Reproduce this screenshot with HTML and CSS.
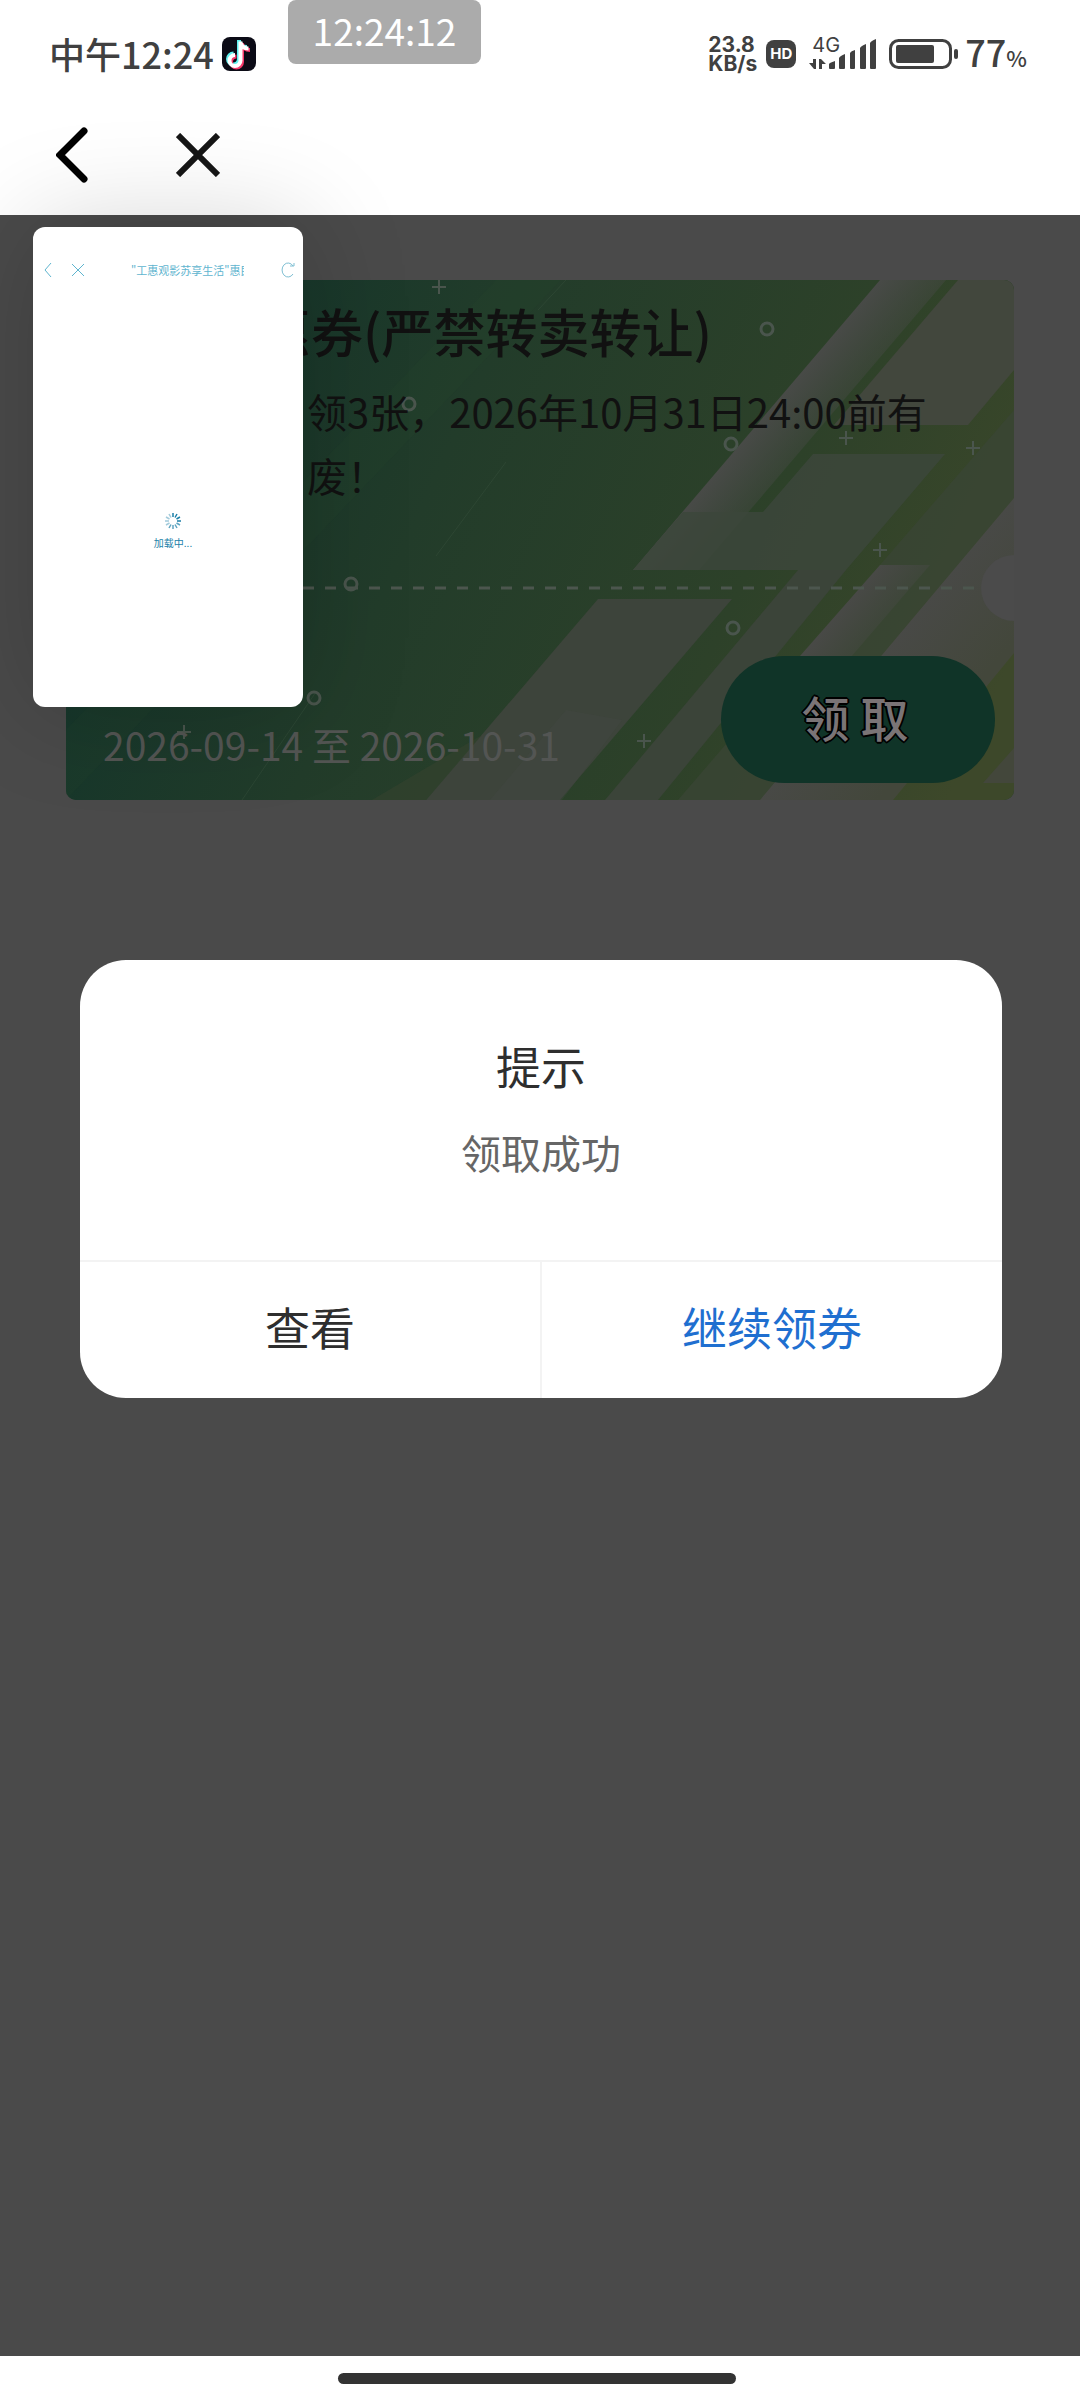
FILE: index.html
```html
<!DOCTYPE html>
<html lang="zh-CN">
<head>
<meta charset="utf-8">
<meta name="viewport" content="width=device-width, initial-scale=1">
<title>领取成功</title>
<link rel="stylesheet" href="styles.css">
</head>
<body>
<header class="top">
  <div class="status">
    <div class="status-left">
      <span class="clock">中午12:24</span>
      <svg class="app-icon" viewBox="0 0 34 34" aria-hidden="true">
        <rect width="34" height="34" rx="8" fill="#0b0b16"/>
        <g fill="none" stroke-width="4">
          <path d="M18 4v19a5.500 5.500 0 1 1-5.500-5.500M18 5c1 4 4 6 8 6" stroke="#5ff0ee" transform="translate(-1 -1)"/>
          <path d="M18 4v19a5.500 5.500 0 1 1-5.500-5.500M18 5c1 4 4 6 8 6" stroke="#f5386a" transform="translate(2 2)"/>
          <path d="M18 4v19a5.500 5.500 0 1 1-5.500-5.500M18 5c1 4 4 6 8 6" stroke="#fff" transform="translate(.5 .5)"/>
        </g>
      </svg>
    </div>
    <div class="status-right">
      <div class="speed"><span>23.8</span><span>KB/s</span></div>
      <span class="hd">HD</span>
      <div class="signal">
        <span class="net">4G</span>
        <svg viewBox="0 0 68 34" width="68" height="34" fill="#404040" aria-hidden="true">
          <path d="M4 22h3v10H5L0 26h4zM10 22h2l5 5h-4v5h-3z"/>
          <path d="M20 27q0-1 6-3v7q0 1-1 1h-4q-1 0-1-1zM30 21q1-2 6-4v14q0 1-1 1h-4q-1 0-1-1zM41 16q1-2 5-3v18q0 1-1 1h-3q-1 0-1-1zM51 11q1-2 6-4v24q0 1-1 1h-4q-1 0-1-1zM61 6q1-2 6-4v29q0 1-1 1h-4q-1 0-1-1z"/>
        </svg>
      </div>
      <svg class="battery" viewBox="0 0 70 30" width="70" height="30" aria-hidden="true">
        <rect x="1.500" y="1.500" width="60" height="27" rx="8" fill="none" stroke="#404040" stroke-width="3"/>
        <rect x="7" y="6" width="38" height="18" rx="2" fill="#404040"/>
        <rect x="65" y="10" width="4" height="10" rx="2" fill="#404040"/>
      </svg>
      <span class="level">77<small>%</small></span>
    </div>
    <div class="time-tag">12:24:12</div>
  </div>
  <nav class="nav">
    <button class="icon-btn" aria-label="返回">
      <svg viewBox="0 0 32 56" width="32" height="56"><path d="M28 4 4 28l24 24" fill="none" stroke="#000" stroke-width="7" stroke-linecap="round"/></svg>
    </button>
    <button class="icon-btn" aria-label="关闭">
      <svg viewBox="0 0 44 44" width="44" height="44"><path d="M2 2l40 40M42 2 2 42" stroke="#161616" stroke-width="6"/></svg>
    </button>
  </nav>
</header>

<main class="page">
  <article class="coupon">
    <svg class="coupon-bg" viewBox="0 0 948 520" preserveAspectRatio="none" aria-hidden="true">
      <defs>
        <linearGradient id="base" gradientUnits="userSpaceOnUse" x1="60" y1="100" x2="900" y2="480">
          <stop offset="0" stop-color="#13352b"/><stop offset=".35" stop-color="#223c2a"/><stop offset=".7" stop-color="#2d4129"/><stop offset="1" stop-color="#3d482a"/>
        </linearGradient>
        <linearGradient id="shine" gradientUnits="userSpaceOnUse" x1="690" y1="145" x2="745" y2="192">
          <stop offset="0" stop-color="#484a47"/><stop offset="1" stop-color="#484a47" stop-opacity=".15"/>
        </linearGradient>
        <linearGradient id="shine2" gradientUnits="userSpaceOnUse" x1="814" y1="285" x2="852" y2="318">
          <stop offset="0" stop-color="#484946"/><stop offset="1" stop-color="#484946" stop-opacity=".2"/>
        </linearGradient>
        <linearGradient id="shine3" gradientUnits="userSpaceOnUse" x1="880" y1="298" x2="950" y2="358">
          <stop offset="0" stop-color="#484946"/><stop offset="1" stop-color="#43473b"/>
        </linearGradient>
      </defs>
      <rect width="948" height="520" fill="url(#base)"/>
      <path d="M430 0h65L0 520V450z" fill="#2a4a30" fill-opacity=".15"/>
      <path d="M814 0h66L633 290h-66z" fill="url(#shine)"/>
      <path d="M892 0h56v90l-46 55H768z" fill="#42473d"/>
      <path d="M747 174h132l-99 116H567l50-58h80z" fill="#3c463b" fill-opacity=".85"/>
      <path d="M532 319h134L494 520H360z" fill="#3d443b"/>
      <path d="M416 455 360 520h-54z" fill="#35422f" fill-opacity=".6"/>
      <path d="M500 430 424 520h72l60-80z" fill="#474a46" fill-opacity=".3"/>
      <path d="M732 290h48L592 520h-53z" fill="#3b4439"/>
      <path d="M948 130v88L694 520h-82l202-235z" fill="#3a4534" fill-opacity=".8"/>
      <path d="M814 285 734 376 698 420h50L864 285z" fill="url(#shine2)"/>
      <path d="M948 218v155L827 520H694z" fill="url(#shine3)"/>
      <path d="M948 468v35h-31z" fill="#43473b"/>
      <path d="M500 0 472 30M440 182 370 276M250 412 176 520" stroke="#3d5542" stroke-opacity=".4" fill="none"/>
      <path d="M237 308H915" stroke="#4c564e" stroke-width="3" stroke-dasharray="11 11"/>
      <g fill="none" stroke="#4a554d" stroke-width="3">
        <circle cx="343" cy="124" r="6"/><circle cx="285" cy="304" r="6"/><circle cx="248" cy="418" r="6"/>
        <circle cx="701" cy="49" r="6"/><circle cx="665" cy="164" r="6"/><circle cx="667" cy="348" r="6"/>
        <path stroke-width="2" d="M366 7h14M373 0v14M571 461h14M578 454v14M773 158h14M780 151v14M900 168h14M907 161v14M807 270h14M814 263v14M111 452h14M118 445v14"/>
      </g>
      <circle cx="948" cy="308" r="33" fill="#4b4b4b"/>
    </svg>
    <h1 class="coupon-title">惠券(严禁转卖转让)</h1>
    <p class="coupon-desc">领3张，2026年10月31日24:00前有<br>废！</p>
    <div class="coupon-foot">
      <span class="coupon-date">2026-09-14 至 2026-10-31</span>
      <button class="claim">领 取</button>
    </div>
  </article>

  <section class="dialog" role="dialog" aria-labelledby="dlg-title">
    <div class="dialog-body">
      <h2 class="dialog-title" id="dlg-title">提示</h2>
      <p class="dialog-text">领取成功</p>
    </div>
    <div class="dialog-actions">
      <button class="action">查看</button>
      <button class="action primary">继续领券</button>
    </div>
  </section>
</main>

<footer class="home"><div class="home-bar"></div></footer>

<aside class="preview">
  <div class="preview-nav">
    <svg viewBox="0 0 8 16" width="8" height="16"><path d="M7 1 1 8l6 7" fill="none" stroke="#5fb5cf"/></svg>
    <svg viewBox="0 0 12 14" width="12" height="14"><path d="M0 1l12 12M12 1 0 13" fill="none" stroke="#5fb5cf"/></svg>
    <span class="preview-title">"工惠观影苏享生活"惠民</span>
    <svg viewBox="0 0 14 16" width="14" height="16"><path d="M12 4A6 7 0 1 0 12 12M9 4h4V1" fill="none" stroke="#7fbfd3"/></svg>
  </div>
  <div class="preview-loading">
    <svg viewBox="-9 -9 18 18" width="18" height="18" stroke="#1b7fa8" stroke-width="1.500">
      <path d="M0-8v4M4-7 2-3.500M7-4 3.500-2M8 0H4"/>
      <path d="M7 4 3.500 2M4 7 2 3.500M0 8V4M-4 7l2-3.500" opacity=".7"/>
      <path d="M-7 4l3.500-2M-8 0h4M-7-4l3.500 2M-4-7l2 3.500" opacity=".4"/>
    </svg>
    <span>加载中...</span>
  </div>
</aside>
</body>
</html>
```
FILE: styles.css
```css
* { box-sizing: border-box; margin: 0; padding: 0; }

body {
  position: relative;
  display: flex;
  flex-direction: column;
  min-height: 100vh;
  background: #fff;
  font-family: "Noto Sans CJK SC", sans-serif;
  color: #404040;
}

button { border: 0; background: none; font: inherit; color: inherit; cursor: pointer; }
svg { display: block; flex: none; }

/* status bar */
.status {
  position: relative;
  display: flex;
  justify-content: space-between;
  align-items: center;
  height: 108px;
  padding: 0 53px 0 49px;
}
.status-left, .status-right { display: flex; align-items: center; }
.status-left { gap: 8px; }
.clock { padding-bottom: 2px; font-size: 36px; line-height: 48px; font-weight: 500; }
.app-icon { width: 34px; height: 34px; }
.speed {
  display: flex;
  flex-direction: column;
  margin-right: 9px;
  font: 700 21px/19px Inter, sans-serif;
}
.hd {
  width: 30px;
  margin-right: 13px;
  border-radius: 8px;
  background: #404040;
  color: #fff;
  font: 700 15px/28px Inter, sans-serif;
  text-align: center;
}
.signal { position: relative; margin-right: 12px; }
.net { position: absolute; left: 3px; top: -2px; font: 400 20px/20px Inter, sans-serif; }
.battery { margin-right: 6px; }
.level { font: 500 36px/40px "Noto Sans CJK SC", sans-serif; }
.level small { font-size: 22px; }
.time-tag {
  position: absolute;
  left: 288px;
  top: 0;
  width: 193px;
  padding-bottom: 4px;
  border-radius: 8px;
  background: #ababab;
  color: #fff;
  font-size: 37px;
  line-height: 60px;
  text-align: center;
}

/* navigation */
.nav { display: flex; align-items: center; gap: 88px; height: 107px; padding: 0 56px 14px; }
.icon-btn { display: flex; }

/* page */
.page { flex: 1; padding: 65px 66px; background: #4a4a4a; }

.coupon {
  position: relative;
  display: flex;
  flex-direction: column;
  height: 520px;
  overflow: hidden;
  border-radius: 10px;
  background: #223c2a;
  color: #111;
}
.coupon > * { position: relative; }
.coupon > .coupon-bg { position: absolute; inset: 0; width: 100%; height: 100%; }
.coupon-title { padding: 15px 0 0 193px; font-size: 52px; line-height: 72px; font-weight: 500; white-space: nowrap; }
.coupon-desc { padding: 12px 0 0 241px; font-size: 40px; line-height: 64px; white-space: nowrap; }
.coupon-foot {
  display: flex;
  justify-content: space-between;
  align-items: flex-end;
  margin-top: auto;
  padding: 0 19px 17px 37px;
}
.coupon-date { padding-bottom: 9px; font-size: 39px; line-height: 60px; color: #535553; }
.claim {
  width: 274px;
  height: 127px;
  padding: 0 6px 8px 0;
  border-radius: 64px;
  background: #103428;
  color: #7a7476;
  font-size: 48px;
  line-height: 64px;
  font-weight: 500;
  text-shadow: 2px 0 #000, -2px 0 #000, 0 2px #000, 0 -2px #000, 1px 1px #000, -1px -1px #000, 1px -1px #000, -1px 1px #000;
}

/* dialog */
.dialog {
  margin: 160px 12px 0 14px;
  overflow: hidden;
  border-radius: 46px;
  background: #fff;
}
.dialog-body { padding: 74px 24px 78px; text-align: center; }
.dialog-title { font-size: 45px; line-height: 64px; font-weight: 400; color: #2e2e2e; }
.dialog-text { margin-top: 24px; font-size: 40px; line-height: 60px; color: #666; }
.dialog-actions { display: flex; border-top: 2px solid #f3f3f3; }
.action { flex: 1; padding-bottom: 6px; font-size: 45px; line-height: 130px; font-weight: 400; color: #2e2e2e; }
.action + .action { border-left: 2px solid #f3f3f3; }
.action.primary { color: #1f6fd0; }

/* gesture bar */
.home { display: flex; justify-content: center; height: 44px; padding: 17px 6px 0 0; }
.home-bar { width: 37%; height: 11px; border-radius: 6px; background: #333; }

/* floating window preview */
.preview {
  position: absolute;
  left: 33px;
  top: 227px;
  width: 270px;
  height: 480px;
  border-radius: 12px;
  background: #fff;
  box-shadow: 0 0 110px rgba(0, 0, 0, .18);
}
.preview-nav { display: flex; align-items: center; height: 20px; margin-top: 33px; padding: 0 8px 0 11px; }
.preview-nav svg + svg { margin-left: 20px; }
.preview-title {
  width: 113px;
  margin: 0 auto 0 47px;
  overflow: hidden;
  font-size: 11px;
  line-height: 16px;
  white-space: nowrap;
  color: #5fb5cf;
}
.preview-loading {
  display: flex;
  flex-direction: column;
  align-items: center;
  gap: 5px;
  margin-top: 232px;
  padding-left: 10px;
  font-size: 10px;
  line-height: 16px;
  color: #1b7fa8;
}
```
